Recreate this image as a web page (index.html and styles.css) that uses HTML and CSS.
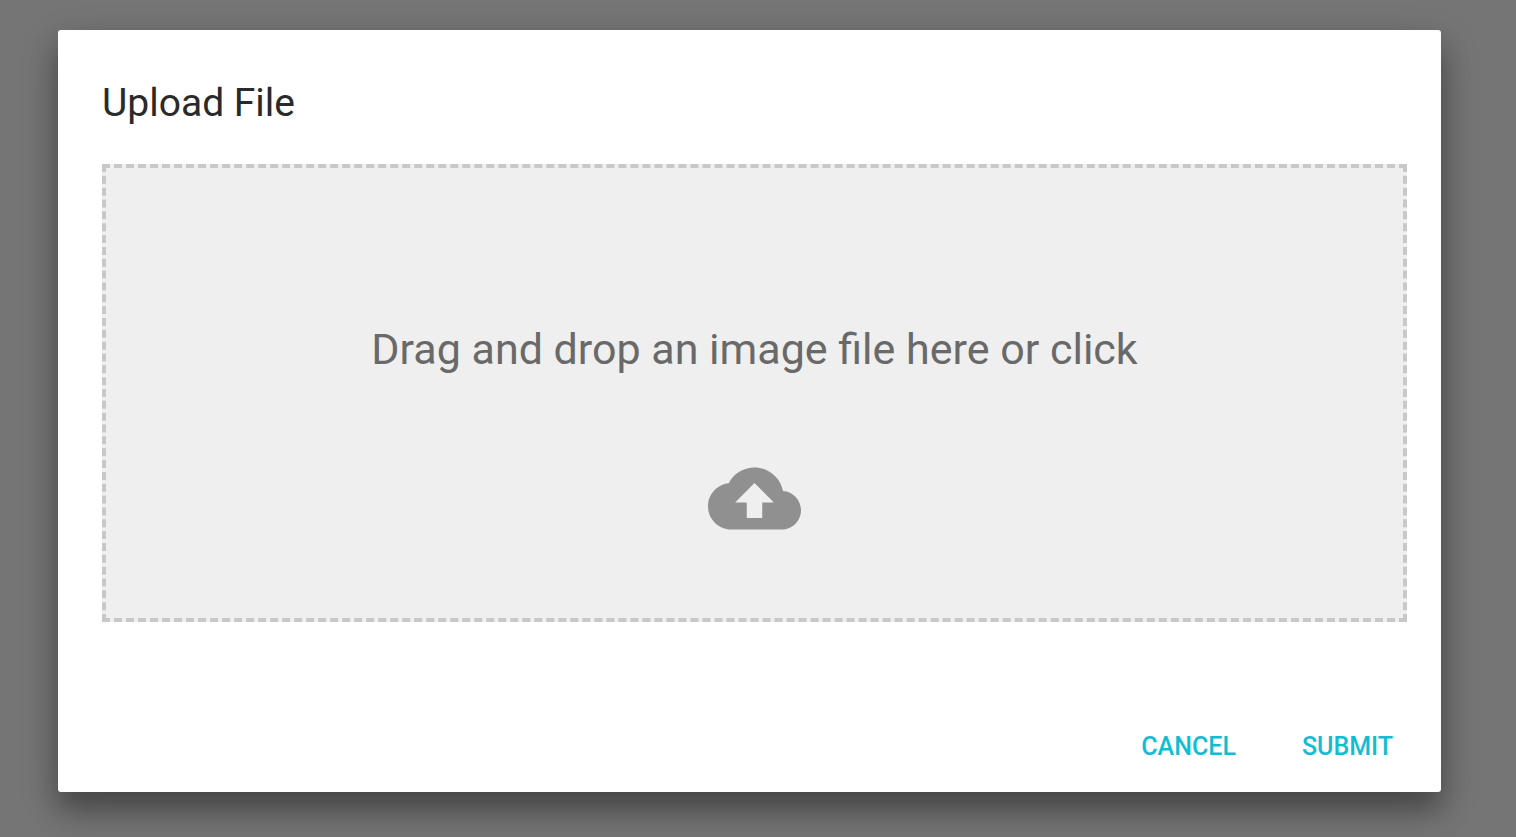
FILE: index.html
```html
<!DOCTYPE html>
<html lang="en">
<head>
<meta charset="utf-8">
<title>Upload File</title>
<link rel="stylesheet" href="styles.css">
</head>
<body>
<main class="backdrop">
  <section class="dialog" role="dialog" aria-labelledby="dialog-title">
    <h1 class="title" id="dialog-title">Upload File</h1>
    <button class="dropzone" type="button">
      <span class="prompt">Drag and drop an image file here or click</span>
      <svg class="cloud" viewBox="0 0 24 24" aria-hidden="true"><path d="M19.35 10.04C18.67 6.59 15.64 4 12 4 9.11 4 6.6 5.64 5.35 8.04 2.34 8.36 0 10.91 0 14c0 3.31 2.69 6 6 6h13c2.76 0 5-2.24 5-5 0-2.64-2.05-4.78-4.65-4.96zM14 13v4h-4v-4H7l5-5 5 5h-3z"/></svg>
    </button>
    <div class="actions">
      <button class="action" type="button">Cancel</button>
      <button class="action" type="button">Submit</button>
    </div>
  </section>
</main>
</body>
</html>
```
FILE: styles.css
```css
* { box-sizing: border-box; }
body {
  margin: 0;
  font-family: Roboto, sans-serif;
  background: #757575;
}
.backdrop {
  min-height: 100vh;
  padding: 30px 75px 45px 58px;
}
.dialog {
  display: flex;
  flex-direction: column;
  min-height: calc(100vh - 75px);
  padding: 49px 34px 19px 44px;
  background: #fff;
  border-radius: 3px;
  box-shadow: 0 18px 28px rgba(0, 0, 0, .28), 0 14px 40px rgba(0, 0, 0, .2);
}
.title {
  margin: 0;
  font-size: 39px;
  line-height: 48px;
  font-weight: 400;
  color: #2a2a2a;
}
.dropzone {
  display: flex;
  flex-direction: column;
  align-items: center;
  min-height: 458px;
  margin-top: 37px;
  padding: 153px 16px 16px;
  border: 4px dashed #c8c8c8;
  background: #efefef;
  font: inherit;
  color: #696969;
  cursor: pointer;
}
.prompt {
  font-size: 43px;
  line-height: 56px;
}
.cloud {
  width: 93px;
  height: 93px;
  margin-top: 75px;
  fill: #909090;
}
.actions {
  display: flex;
  justify-content: flex-end;
  gap: 38px;
  margin-top: auto;
}
.action {
  padding: 12px 14px;
  border: 0;
  background: none;
  font: 500 25px/28px Roboto, sans-serif;
  text-transform: uppercase;
  color: #12bdd2;
  cursor: pointer;
}
```
